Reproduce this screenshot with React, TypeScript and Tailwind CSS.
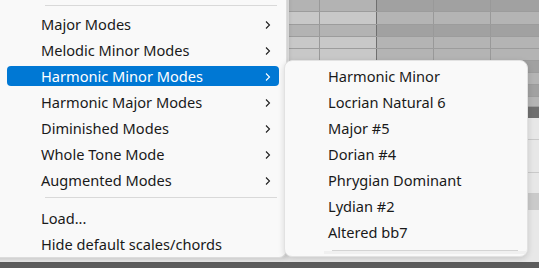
import React from 'react';

const mainItems = [
  { label: "Major Modes", sub: true },
  { label: "Melodic Minor Modes", sub: true },
  { label: "Harmonic Minor Modes", sub: true, active: true },
  { label: "Harmonic Major Modes", sub: true },
  { label: "Diminished Modes", sub: true },
  { label: "Whole Tone Mode", sub: true },
  { label: "Augmented Modes", sub: true },
];

const subItems = [
  "Harmonic Minor",
  "Locrian Natural 6",
  "Major #5",
  "Dorian #4",
  "Phrygian Dominant",
  "Lydian #2",
  "Altered bb7",
];

// piano roll rows, dark = black key row
const rows = [
  { h: 12, dark: true },
  { h: 13, dark: false },
  { h: 12, dark: true },
  { h: 12, dark: false },
  { h: 12, dark: false },
  { h: 12, dark: true },
  { h: 12, dark: false },
  { h: 12, dark: true },
  { h: 10, dark: false },
];

const Chevron = ({ white }: { white?: boolean }) => (
  <svg width="6" height="10" viewBox="0 0 6 10" className="shrink-0">
    <path d="M1 1.5 L4.5 5 L1 8.5" fill="none" stroke={white ? "#ffffff" : "#1f1f1f"} strokeWidth="1.1" />
  </svg>
);

const PianoRoll: React.FC = () => (
  <div className="flex flex-col">
    {rows.map((r, i) => (
      <div key={i} className="flex border-b border-[#9c9c9c]" style={{ height: r.h }}>
        <div className={`w-[31px] border-r border-[#999] ${r.dark ? "bg-[#b3b3b3]" : "bg-[#c8c8c8]"}`} />
        <div className={`w-[57px] border-r border-[#6f6f6f] ${r.dark ? "bg-[#b3b3b3]" : "bg-[#c8c8c8]"}`} />
        <div className={`w-[57px] border-r border-[#999] ${r.dark ? "bg-[#a1a1a1]" : "bg-[#b4b4b4]"}`} />
        <div className={`w-[57px] border-r border-[#999] ${r.dark ? "bg-[#a1a1a1]" : "bg-[#b4b4b4]"}`} />
        <div className={`flex-1 ${r.dark ? "bg-[#a1a1a1]" : "bg-[#b4b4b4]"}`} />
      </div>
    ))}
    <div className="h-[11px] bg-[#6f6f6f]" />
    <div className="h-[22px] bg-[#e7e7e7] border-b border-[#c9c9c9]" />
    <div className="h-[33px] bg-[#e7e7e7] border-b border-[#c9c9c9]" />
    <div className="h-[21px] bg-[#e7e7e7] border-b border-[#c9c9c9]" />
    <div className="h-[16px] bg-[#cacaca]" />
    <div className="flex-1 bg-[#e7e7e7]" />
  </div>
);

export default function App() {
  return (
    <div
      className="relative w-[539px] h-[268px] overflow-hidden bg-[#e8e8e8] flex flex-col"
      style={{ fontFamily: '"Noto Sans", "Open Sans", sans-serif' }}
    >
      <div className="flex h-[262px]">
        <div className="w-[289px]" />
        <div className="flex-1">
          <PianoRoll />
        </div>
      </div>
      <div className="h-[6px] bg-[#5c5c5c]" />

      {/* main menu */}
      <div className="absolute left-[-10px] top-[-10px] w-[297px] h-[268px] bg-[#f9f9f9] rounded-br-[8px] border-r border-b border-[#dcdcdc] shadow-[2px_2px_4px_rgba(0,0,0,0.12)] pt-[15px] pl-[10px]">
        <div className="h-px bg-[#d9d9d9] ml-[45px] mr-[9px]" />
        <div className="h-[5px]" />
        {mainItems.map((it) => (
          <div key={it.label} className="h-[26px] px-[7px] py-[3px]">
            <div
              className={`h-full flex items-center justify-between pl-[34px] pr-[8px] pt-[2px] rounded-[4px] text-[14.6px] ${
                it.active ? "bg-[#0078d4] text-white" : "text-[#1a1a1a]"
              }`}
            >
              <span>{it.label}</span>
              <Chevron white={it.active} />
            </div>
          </div>
        ))}
        <div className="h-[4px]" />
        <div className="h-px bg-[#d9d9d9] ml-[45px] mr-[9px]" />
        <div className="h-[7px]" />
        <div className="h-[26px] flex items-center pl-[41px] pt-[2px] text-[14.6px] text-[#1a1a1a]">Load...</div>
        <div className="h-[25px] flex items-center pl-[41px] pt-[2px] text-[14.6px] text-[#1a1a1a]">Hide default scales/chords</div>
      </div>

      {/* submenu */}
      <div className="absolute left-[284px] top-[60px] w-[244px] h-[197px] bg-[#f9f9f9] rounded-[8px] border border-[#e2e2e2] shadow-[0_2px_6px_rgba(0,0,0,0.14)] overflow-hidden pt-[2px]">
        {subItems.map((s) => (
          <div key={s} className="h-[26px] flex items-center pl-[43px] pt-[2px] text-[14.6px] text-[#1a1a1a]">
            {s}
          </div>
        ))}
        <div className="h-[5px]" />
        <div className="h-px bg-[#d4d4d4] ml-[47px] mr-[9px]" />
        <div className="h-[3px] bg-[#f0f0f0] ml-[39px]" />
      </div>
    </div>
  );
}
